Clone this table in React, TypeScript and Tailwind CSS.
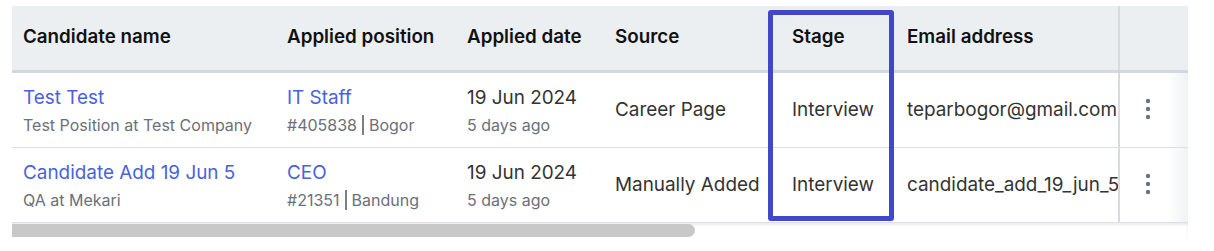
import React from "react";

const rows = [
  {
    name: "Test Test",
    sub: "Test Position at Test Company",
    position: "IT Staff",
    code: "#405838",
    city: "Bogor",
    date: "19 Jun 2024",
    ago: "5 days ago",
    source: "Career Page",
    stage: "Interview",
    email: "teparbogor@gmail.com",
  },
  {
    name: "Candidate Add 19 Jun 5",
    sub: "QA at Mekari",
    position: "CEO",
    code: "#21351",
    city: "Bandung",
    date: "19 Jun 2024",
    ago: "5 days ago",
    source: "Manually Added",
    stage: "Interview",
    email: "candidate_add_19_jun_5@mekari.com",
  },
];

function Dots() {
  return (
    <svg width="6" height="22" viewBox="0 0 6 22" fill="#6b7280">
      <circle cx="3" cy="3" r="2.2" />
      <circle cx="3" cy="11" r="2.2" />
      <circle cx="3" cy="19" r="2.2" />
    </svg>
  );
}

export default function App() {
  return (
    <div className="bg-white w-[1214px] h-[251px] pt-[6px] pl-[12px] font-['Inter','Noto_Sans',sans-serif]">
      <div className="relative w-[1176px]">
        {/* header */}
        <div className="flex h-[67px] bg-[#eceff2] border-b-[3px] border-[#d3d8de] text-[18.8px] font-semibold text-[#111]">
          <div className="w-[264px] pl-[11px] pb-[1px] flex items-center">Candidate name</div>
          <div className="w-[180px] pl-[11px] pb-[1px] flex items-center">Applied position</div>
          <div className="w-[148px] pl-[11px] pb-[1px] flex items-center">Applied date</div>
          <div className="w-[177px] pl-[11px] pb-[1px] flex items-center">Source</div>
          <div className="w-[115px] pl-[11px] pb-[1px] flex items-center">Stage</div>
          <div className="w-[222px] pl-[11px] pb-[1px] flex items-center">Email address</div>
          <div className="w-[70px] border-l-[2px] border-[#d6dbe1]" />
        </div>

        {rows.map((r, i) => (
          <div key={i} className="flex h-[75px] border-b border-[#dcdfe3] text-[18.9px] text-[#333]">
            <div className="w-[264px] pl-[11px] pt-[2px] flex flex-col justify-center">
              <span className="text-[#4a61dd] leading-[28px]">{r.name}</span>
              <span className="text-[16px] text-[#6b7079] leading-[26px]">{r.sub}</span>
            </div>
            <div className="w-[180px] pl-[11px] pt-[2px] flex flex-col justify-center">
              <span className="text-[#4a61dd] leading-[28px]">{r.position}</span>
              <span className="text-[16px] text-[#6b7079] leading-[26px] flex items-center">
                {r.code}
                <span className="inline-block w-[2px] h-[20px] bg-[#7a7f88] mx-[5px]" />
                {r.city}
              </span>
            </div>
            <div className="w-[148px] pl-[11px] pt-[2px] flex flex-col justify-center">
              <span className="leading-[28px]">{r.date}</span>
              <span className="text-[16px] text-[#6b7079] leading-[26px]">{r.ago}</span>
            </div>
            <div className="w-[177px] pl-[11px] flex items-center whitespace-nowrap">{r.source}</div>
            <div className="w-[115px] pl-[11px] flex items-center">{r.stage}</div>
            <div className="w-[222px] pl-[11px] flex items-center overflow-hidden whitespace-nowrap">{r.email}</div>
            <div className="w-[70px] border-l-[2px] border-[#d6dbe1] flex items-center pl-[25px] pb-[3px] bg-gradient-to-r from-white from-70% to-[#f1f2f4]">
              <Dots />
            </div>
          </div>
        ))}

        {/* scrollbar */}
        <div className="h-[15px] bg-white shadow-[inset_0_2px_3px_rgba(0,0,0,0.08)] flex items-center">
          <div className="w-[683px] h-[13px] bg-[#c8c8c8] rounded-r-[7px]" />
        </div>

        {/* highlight box over Stage column */}
        <div className="absolute left-[756px] top-[4px] w-[126px] h-[211px] border-[5px] border-[#4047c9] rounded-[3px]" />
      </div>
    </div>
  );
}
